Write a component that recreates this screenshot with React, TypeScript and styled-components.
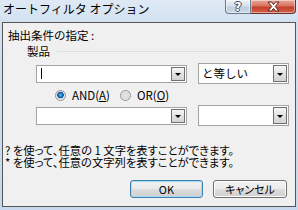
import React from "react";
import styled, { createGlobalStyle } from "styled-components";

const GlobalStyle = createGlobalStyle`
  html, body { margin: 0; padding: 0; }
  body { font-family: "Noto Sans CJK JP", "Noto Sans", sans-serif; background: #c9daee; }
  * { box-sizing: border-box; }
`;

const Window = styled.div`
  width: 298px;
  height: 210px;
  display: flex;
  flex-direction: column;
  padding: 0 2px 3px 2px;
  background: linear-gradient(#dfe9f5 0px, #d2e1f1 22px, #c6d8ec 100%);
`;

const TitleBar = styled.div`
  height: 22px;
  display: flex;
  justify-content: space-between;
  align-items: flex-start;
  flex: none;
`;

const Title = styled.div`
  font-size: 12px;
  line-height: 16px;
  margin: 1px 0 0 1px;
  color: #000;
  white-space: nowrap;
`;

const CaptionButtons = styled.div`
  display: flex;
  height: 14px;
`;

const CaptionButton = styled.div<{ $close?: boolean }>`
  width: ${(p) => (p.$close ? 45 : 26)}px;
  height: 14px;
  display: flex;
  align-items: center;
  justify-content: center;
  border: 1px solid ${(p) => (p.$close ? "#6b3028" : "#6a7a8c")};
  border-top: none;
  border-radius: ${(p) => (p.$close ? "0 0 4px 0" : "0 0 0 4px")};
  border-left: ${(p) => (p.$close ? "none" : undefined)};
  background: ${(p) =>
    p.$close
      ? "linear-gradient(#e9a99b 0%, #d9735f 45%, #c4402a 55%, #d2604a 100%)"
      : "linear-gradient(#eef3f8 0%, #d6e0eb 45%, #c2cfdd 55%, #ccd8e5 100%)"};
  box-shadow: inset 0 0 0 1px rgba(255, 255, 255, 0.45);
`;

const HelpGlyph = styled.span`
  font-family: "DejaVu Sans", sans-serif;
  font-weight: bold;
  font-size: 12px;
  line-height: 12px;
  color: #fff;
  text-shadow: 1px 0 0 #3d4b5a, -1px 0 0 #3d4b5a, 0 1px 0 #3d4b5a, 0 -1px 0 #3d4b5a;
`;

const Panel = styled.div`
  flex: 1;
  border: 1px solid #555;
  background: #f0f0f0;
  display: flex;
  flex-direction: column;
  font-size: 11.5px;
  color: #000;
`;

const Heading = styled.div`
  height: 15px;
  line-height: 15px;
  margin: 5px 0 0 5px;
  white-space: nowrap;
`;

const GroupRow = styled.div`
  height: 14px;
  margin: 1px 15px 0 24px;
  display: flex;
  align-items: center;
`;

const GroupLabel = styled.span`
  line-height: 14px;
  white-space: nowrap;
`;

const Separator = styled.div`
  flex: 1;
  height: 1px;
  margin-left: 7px;
  background: #d5dfe5;
`;

const ComboRow = styled.div<{ $top: number }>`
  height: 21px;
  margin: ${(p) => p.$top}px 0 0 33px;
  display: flex;
  align-items: center;
  gap: 11px;
`;

const Combo = styled.div<{ $w: number; $h: number }>`
  width: ${(p) => p.$w}px;
  height: ${(p) => p.$h}px;
  border: 1px solid #a3a3a3;
  background: #fff;
  display: flex;
  align-items: stretch;
  padding: 1px;
`;

const ComboText = styled.div`
  flex: 1;
  display: flex;
  align-items: center;
  padding-left: 2px;
  font-size: 11.5px;
  line-height: 13px;
  white-space: nowrap;
`;

const Caret = styled.span`
  width: 1px;
  height: 11px;
  background: #000;
  margin-left: 1px;
`;

const DropButton = styled.div`
  width: 14px;
  border: 1px solid #707070;
  background: linear-gradient(#f6f6f6, #e2e2e2 50%, #d4d4d4);
  display: flex;
  align-items: center;
  justify-content: center;
`;

const Arrow = styled.span`
  width: 0;
  height: 0;
  border-left: 3px solid transparent;
  border-right: 3px solid transparent;
  border-top: 3px solid #000;
  margin-top: 1px;
`;

const RadioRow = styled.div`
  height: 14px;
  margin: 4px 0 0 52px;
  display: flex;
  align-items: center;
`;

const RadioItem = styled.label`
  display: flex;
  align-items: center;
  gap: 6px;
  margin-right: 10px;
  white-space: nowrap;
  font-size: 11.5px;
  line-height: 14px;
`;

const RadioCircle = styled.span<{ $on?: boolean }>`
  width: 11px;
  height: 11px;
  border-radius: 50%;
  border: 1px solid #8f9092;
  background: ${(p) =>
    p.$on
      ? "radial-gradient(circle at 50% 45%, #6cc3f5 0px, #1b75c0 2px, #104a8a 3px, #d9dee4 3.5px, #f4f4f4 5px)"
      : "radial-gradient(circle at 50% 50%, #e6e6e6 0px, #dadada 3px, #f4f4f4 5px)"};
`;

const HelpBlock = styled.div`
  margin: 18px 0 0 2px;
  font-size: 11.3px;
  line-height: 12px;
  font-feature-settings: "palt";
  white-space: nowrap;
`;

const HelpLine = styled.div`
  height: 12px;
`;

const ButtonRow = styled.div`
  display: flex;
  justify-content: flex-end;
  gap: 10px;
  margin: 12px 8px 0 0;
`;

const PushButton = styled.div<{ $default?: boolean; $w: number }>`
  width: ${(p) => p.$w}px;
  height: 18px;
  border-radius: 3px;
  border: 1px solid ${(p) => (p.$default ? "#3c7fb1" : "#707070")};
  background: linear-gradient(#f2f2f2 0%, #ebebeb 48%, #dddddd 52%, #cfcfcf 100%);
  box-shadow: inset 0 0 0 1px ${(p) => (p.$default ? "#a8dcf4" : "#fcfcfc")};
  display: flex;
  align-items: center;
  justify-content: center;
  font-size: 11px;
  line-height: 12px;
  font-feature-settings: "palt";
`;

const CloseIcon = () => (
  <svg width="13" height="11" viewBox="0 0 13 11">
    <path
      d="M1 1 H4.5 L6.5 3.6 L8.5 1 H12 L8.3 5.5 L12 10 H8.5 L6.5 7.4 L4.5 10 H1 L4.7 5.5 Z"
      fill="#fff"
      stroke="#5a2118"
      strokeWidth="1"
      strokeLinejoin="round"
    />
  </svg>
);

export default function App() {
  return (
    <>
      <GlobalStyle />
      <Window>
        <TitleBar>
          <Title>オートフィルタ オプション</Title>
          <CaptionButtons>
            <CaptionButton>
              <HelpGlyph>?</HelpGlyph>
            </CaptionButton>
            <CaptionButton $close>
              <CloseIcon />
            </CaptionButton>
          </CaptionButtons>
        </TitleBar>
        <Panel>
          <Heading>抽出条件の指定 :</Heading>
          <GroupRow>
            <GroupLabel>製品</GroupLabel>
            <Separator />
          </GroupRow>
          <ComboRow $top={5}>
            <Combo $w={151} $h={18}>
              <ComboText>
                <Caret />
              </ComboText>
              <DropButton>
                <Arrow />
              </DropButton>
            </Combo>
            <Combo $w={91} $h={21}>
              <ComboText>と等しい</ComboText>
              <DropButton>
                <Arrow />
              </DropButton>
            </Combo>
          </ComboRow>
          <RadioRow>
            <RadioItem>
              <RadioCircle $on />
              <span>
                AND(<u>A</u>)
              </span>
            </RadioItem>
            <RadioItem>
              <RadioCircle />
              <span>
                OR(<u>O</u>)
              </span>
            </RadioItem>
          </RadioRow>
          <ComboRow $top={3}>
            <Combo $w={151} $h={18}>
              <ComboText />
              <DropButton>
                <Arrow />
              </DropButton>
            </Combo>
            <Combo $w={91} $h={21}>
              <ComboText />
              <DropButton>
                <Arrow />
              </DropButton>
            </Combo>
          </ComboRow>
          <HelpBlock>
            <HelpLine>? を使って、任意の 1 文字を表すことができます。</HelpLine>
            <HelpLine>* を使って、任意の文字列を表すことができます。</HelpLine>
          </HelpBlock>
          <ButtonRow>
            <PushButton $default $w={73}>OK</PushButton>
            <PushButton $w={74}>キャンセル</PushButton>
          </ButtonRow>
        </Panel>
      </Window>
    </>
  );
}
